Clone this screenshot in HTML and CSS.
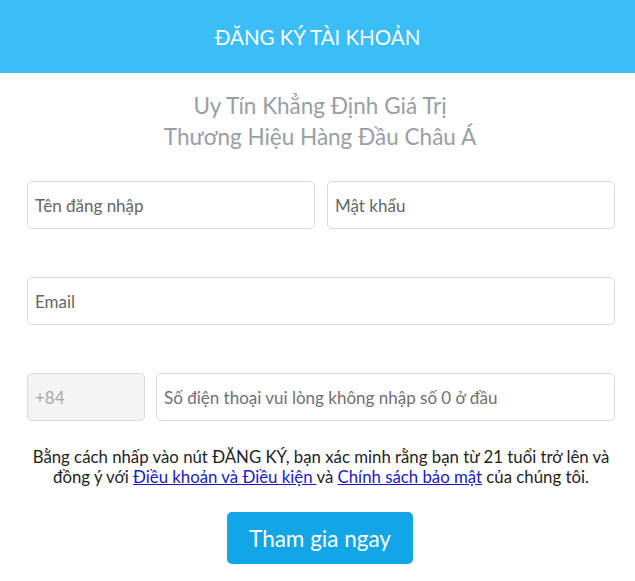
FILE: index.html
```html
<!DOCTYPE html>
<html lang="vi">
<head>
<meta charset="utf-8">
<title>Đăng ký tài khoản</title>
<link rel="stylesheet" href="styles.css">
</head>
<body>
<div class="modal">
  <header class="modal-header">ĐĂNG KÝ TÀI KHOẢN</header>
  <div class="modal-body">
    <p class="slogan">Uy Tín Khẳng Định Giá Trị<br>Thương Hiệu Hàng Đầu Châu Á</p>
    <div class="row two">
      <input class="field" type="text" placeholder="Tên đăng nhập">
      <input class="field" type="password" placeholder="Mật khẩu">
    </div>
    <div class="row">
      <input class="field" type="email" placeholder="Email">
    </div>
    <div class="row phone">
      <div class="prefix">+84</div>
      <input class="field" type="tel" placeholder="Số điện thoại vui lòng không nhập số 0 ở đầu">
    </div>
    <p class="terms">Bằng cách nhấp vào nút ĐĂNG KÝ, bạn xác minh rằng bạn từ 21 tuổi trở lên và đồng ý với <a href="#">Điều khoản và Điều kiện </a>và <a href="#">Chính sách bảo mật</a> của chúng tôi.</p>
    <div class="actions"><button class="btn" type="button">Tham gia ngay</button></div>
  </div>
</div>
</body>
</html>
```
FILE: styles.css
```css
* { box-sizing: border-box; }
html, body { margin: 0; padding: 0; background: #fff; }
body { font-family: Lato, "Open Sans", sans-serif; }
.modal { width: 635px; }
.modal-header {
  height: 73px;
  background: #3bbdf7;
  color: #fff;
  font-size: 20.5px;
  display: flex;
  align-items: center;
  justify-content: center;
  padding-top: 1px;
}
.modal-body { padding: 0 20px 0 27px; }
.slogan {
  margin: 17px 0 0;
  text-align: center;
  color: #9a9ea6;
  font-size: 22.5px;
  line-height: 31px;
  padding-right: 2px;
}
.row { display: flex; gap: 12px; margin-top: 48px; }
.row.two { margin-top: 29px; }
.row.phone { gap: 11px; }
.field, .prefix {
  height: 48px;
  border: 1px solid #d9d9d9;
  border-radius: 5px;
  padding: 0 7px;
  font-family: inherit;
  font-size: 17px;
  color: #333;
  background: #fff;
  outline: none;
  flex: 1;
  min-width: 0;
}
.field::placeholder { color: #666; opacity: 1; }
.prefix {
  flex: 0 0 118px;
  background: #f4f4f4;
  color: #a8a8a8;
  display: flex;
  align-items: center;
}
.phone .field::placeholder { color: #707070; }
.terms {
  margin: 26px 0 0;
  text-align: center;
  font-size: 16.8px;
  line-height: 20px;
  color: #1e1e1e;
}
.terms a { color: #1a1ac4; text-decoration: underline; }
.actions { display: flex; justify-content: center; margin-top: 25px; padding-right: 2px; }
.btn {
  width: 186px;
  height: 52px;
  border: 0;
  border-radius: 5px;
  background: #13a6e6;
  color: #fff;
  font-family: inherit;
  font-size: 22.5px;
  cursor: pointer;
}
```
